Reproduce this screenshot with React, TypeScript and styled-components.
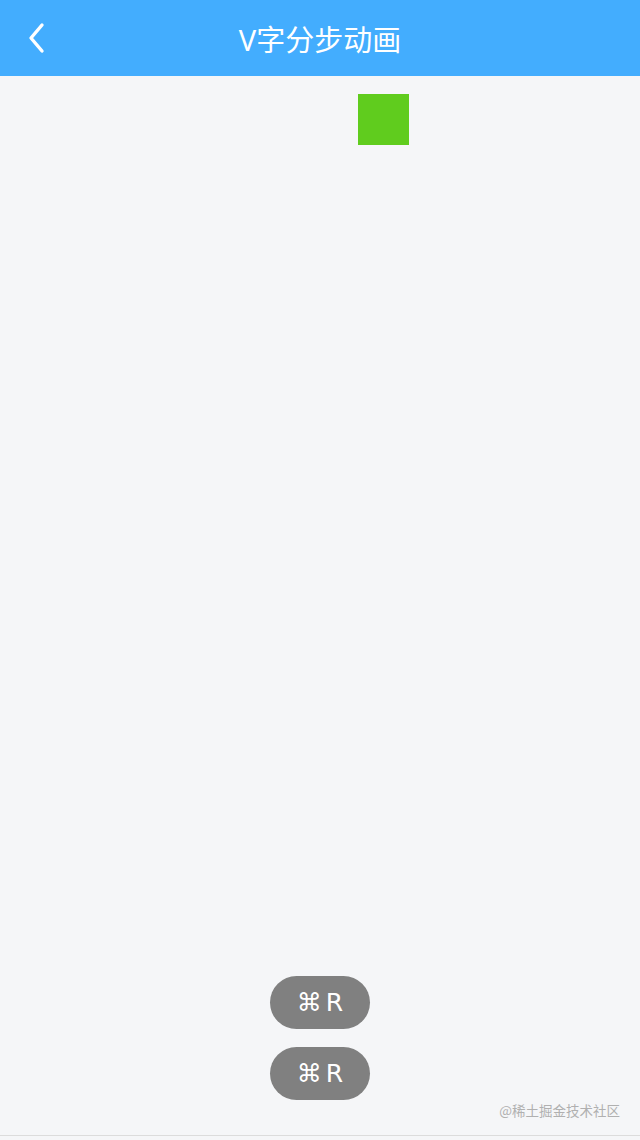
import React from "react";
import styled, { createGlobalStyle } from "styled-components";

const GlobalStyle = createGlobalStyle`
  html, body {
    margin: 0;
    padding: 0;
    background: #f5f6f8;
  }
  body {
    font-family: "Noto Sans", "Noto Sans CJK SC", sans-serif;
  }
`;

const Page = styled.div`
  width: 640px;
  height: 1140px;
  display: flex;
  flex-direction: column;
  background: #f5f6f8;
  position: relative;
  overflow: hidden;
`;

const Header = styled.header`
  height: 76px;
  flex-shrink: 0;
  background: #43adfe;
  display: flex;
  align-items: center;
  justify-content: center;
  position: relative;
`;

const BackButton = styled.button`
  position: absolute;
  left: 20px;
  top: 22px;
  width: 32px;
  height: 32px;
  padding: 0;
  border: none;
  background: transparent;
  display: flex;
  align-items: center;
  justify-content: center;
  cursor: pointer;
`;

const Title = styled.h1`
  margin: 0;
  color: #ffffff;
  font-size: 29px;
  font-weight: 400;
  font-family: "Noto Sans", "Noto Sans CJK SC", sans-serif;
`;

const Stage = styled.main`
  flex: 1;
  display: flex;
  flex-direction: column;
  padding-top: 18px;
  padding-left: 358px;
`;

const Box = styled.div`
  width: 51px;
  height: 51px;
  background: #60cc1e;
`;

const Controls = styled.div`
  display: flex;
  flex-direction: column;
  align-items: center;
  gap: 18px;
  padding-bottom: 35px;
`;

const KeyButton = styled.button`
  width: 100px;
  height: 53px;
  border: none;
  border-radius: 27px;
  background: #808080;
  color: #ffffff;
  font-size: 25px;
  font-family: "DejaVu Sans", "Noto Sans", sans-serif;
  display: flex;
  align-items: center;
  justify-content: center;
  gap: 4px;
  padding: 0;
  cursor: pointer;
`;

const Watermark = styled.span`
  position: absolute;
  right: 20px;
  bottom: 20px;
  color: #b0b0b0;
  font-size: 13.5px;
  font-family: "Noto Sans CJK SC", sans-serif;
`;

const BottomLine = styled.div`
  height: 4px;
  border-top: 1px solid #dcdcdc;
  background: #f5f6f8;
`;

export default function App() {
  return (
    <Page>
      <GlobalStyle />
      <Header>
        <BackButton aria-label="back">
          <svg width="20" height="32" viewBox="0 0 20 32" fill="none">
            <path
              d="M16 3 L5 16 L16 29"
              stroke="#ffffff"
              strokeWidth="3.4"
              strokeLinecap="round"
              strokeLinejoin="round"
            />
          </svg>
        </BackButton>
        <Title>V字分步动画</Title>
      </Header>
      <Stage>
        <Box />
      </Stage>
      <Controls>
        <KeyButton>
          <span>⌘</span>
          <span>R</span>
        </KeyButton>
        <KeyButton>
          <span>⌘</span>
          <span>R</span>
        </KeyButton>
      </Controls>
      <BottomLine />
      <Watermark>@稀土掘金技术社区</Watermark>
    </Page>
  );
}
